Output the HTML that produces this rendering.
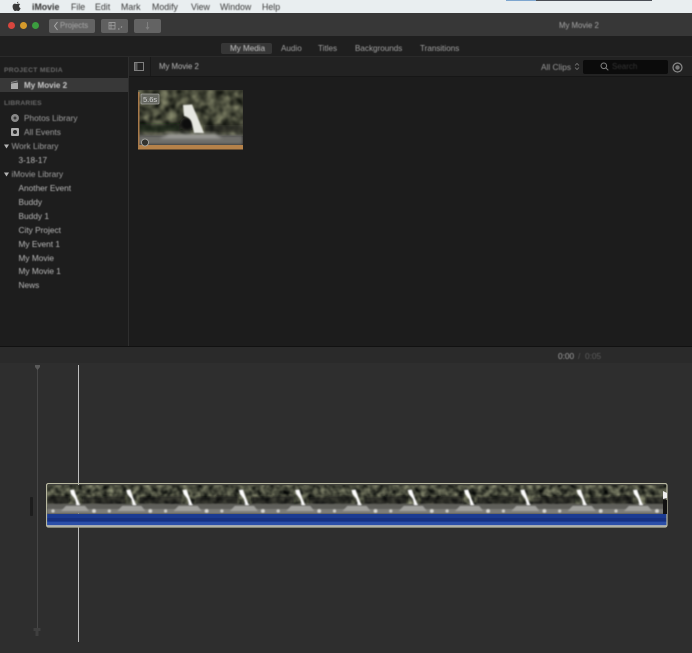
<!DOCTYPE html>
<html lang="en">
<head>
<meta charset="utf-8">
<title>iMovie</title>
<style>
html,body{margin:0;padding:0;background:#2d2d2d}
body{width:692px;height:653px;position:relative;overflow:hidden;font-family:"Liberation Sans",sans-serif}
#w{position:absolute;left:0;top:0;width:692px;height:653px;filter:blur(.35px)}
.a{position:absolute}
.t{position:absolute;white-space:nowrap;line-height:12px;filter:blur(.45px)}
.m{font-size:8.800px;color:#3c3c3c;top:1px}
.s{font-size:8.300px;color:#b8b8b8}
.tab{font-size:8.100px;color:#a0a0a0;top:42.500px}
</style>
</head>
<body>
<div id="w">
<!-- menu bar -->
<div class="a" style="left:0;top:0;width:692px;height:13px;background:#e9eef0"></div>
<div class="a" style="left:506px;top:0;width:30px;height:1px;background:#7ea6cf"></div>
<div class="a" style="left:536px;top:0;width:116px;height:1px;background:#4a4e55"></div>
<svg class="a" style="left:12px;top:1px" width="9" height="11" viewBox="0 0 9 11"><path d="M6.300 .6C5.500 .8 4.900 1.500 4.900 2.400C5.800 2.300 6.400 1.500 6.300 .6ZM4.700 3C4 3 3.600 2.600 2.900 2.600C1.600 2.700 .6 3.800 .6 5.500C.6 7.600 2 10 3.100 10C3.700 10 4 9.600 4.700 9.600C5.400 9.600 5.600 10 6.300 10C7.300 10 8.300 8.200 8.600 7.200C7.700 6.800 7.100 6 7.100 5.100C7.100 4.300 7.500 3.700 8.200 3.300C7.700 2.700 7 2.600 6.500 2.600C5.800 2.600 5.200 3 4.700 3Z" fill="#3a3a3a"/></svg>
<div class="t m" style="left:32px;font-weight:bold;color:#333">iMovie</div>
<div class="t m" style="left:71px">File</div>
<div class="t m" style="left:95px">Edit</div>
<div class="t m" style="left:121px">Mark</div>
<div class="t m" style="left:152px">Modify</div>
<div class="t m" style="left:191px">View</div>
<div class="t m" style="left:220px">Window</div>
<div class="t m" style="left:262px">Help</div>

<!-- title bar -->
<div class="a" style="left:0;top:13px;width:692px;height:23px;background:#373737"></div>
<div class="a" style="left:8px;top:22px;width:7px;height:7px;border-radius:50%;background:#d8463e"></div>
<div class="a" style="left:20px;top:22px;width:7px;height:7px;border-radius:50%;background:#d59a2b"></div>
<div class="a" style="left:32px;top:22px;width:7px;height:7px;border-radius:50%;background:#3c9d3f"></div>
<div class="a" style="left:49px;top:19px;width:46px;height:14px;border-radius:2px;background:#636363"></div>
<svg class="a" style="left:53px;top:21px" width="6" height="10" viewBox="0 0 6 10"><path d="M4.500 1L1.500 5L4.500 9" fill="none" stroke="#aaa" stroke-width="1"/></svg>
<div class="t" style="left:60px;top:20px;font-size:7.800px;color:#a8a8a8">Projects</div>
<div class="a" style="left:101px;top:19px;width:27px;height:14px;border-radius:2px;background:#606060"></div>
<svg class="a" style="left:106px;top:21px" width="18" height="10" viewBox="0 0 18 10"><path d="M3 1.500H9V8H3ZM5 1.500V8M3 4.700H9" fill="none" stroke="#999" stroke-width=".9"/><path d="M12 8H13.500M15 6.500L16 5.500" stroke="#a5a5a5" stroke-width="1"/></svg>
<div class="a" style="left:134px;top:19px;width:27px;height:14px;border-radius:2px;background:#636363"></div>
<svg class="a" style="left:143px;top:21px" width="9" height="10" viewBox="0 0 9 10"><path d="M4.500 1V7M3 6L4.500 8L6 6" fill="none" stroke="#808080" stroke-width="1"/></svg>
<div class="t" style="left:559px;top:20px;font-size:7.800px;color:#a5a5a5">My Movie 2</div>

<!-- tab bar -->
<div class="a" style="left:0;top:36px;width:692px;height:21px;background:#1f1f1f"></div>
<div class="a" style="left:221px;top:43px;width:51px;height:11px;border-radius:2px;background:#363636"></div>
<div class="t tab" style="left:230px;color:#c4c4c4">My Media</div>
<div class="t tab" style="left:281px">Audio</div>
<div class="t tab" style="left:318px">Titles</div>
<div class="t tab" style="left:355px">Backgrounds</div>
<div class="t tab" style="left:420px">Transitions</div>
<div class="a" style="left:0;top:56px;width:692px;height:1px;background:#2a2a2a"></div>

<!-- sidebar -->
<div class="a" style="left:0;top:57px;width:128px;height:289px;background:#1d1d1d"></div>
<div class="a" style="left:128px;top:57px;width:1px;height:289px;background:#2e2e2e"></div>
<div class="t" style="left:4px;top:65px;font-size:6.700px;font-weight:bold;color:#6a6a6a;letter-spacing:.3px">PROJECT MEDIA</div>
<div class="a" style="left:0;top:78px;width:128px;height:14px;background:#383838"></div>
<svg class="a" style="left:10px;top:80px" width="9" height="10" viewBox="0 0 9 10"><path d="M1 3.500L8 2.500V9H1Z" fill="#aaa"/><path d="M1 2.500L7.500 1" stroke="#888" stroke-width="1"/></svg>
<div class="t" style="left:24px;top:80px;font-size:8.100px;font-weight:bold;color:#c8c8c8">My Movie 2</div>
<div class="t" style="left:4px;top:98px;font-size:6.700px;font-weight:bold;color:#6a6a6a;letter-spacing:.2px">LIBRARIES</div>
<svg class="a" style="left:10px;top:113px" width="10" height="10" viewBox="0 0 10 10"><circle cx="5" cy="5" r="4" fill="#8a8a8a"/><circle cx="5" cy="5" r="1.500" fill="#3a3a3a"/></svg>
<div class="t s" style="left:24px;top:112px;color:#a0a0a0">Photos Library</div>
<svg class="a" style="left:10px;top:127px" width="10" height="10" viewBox="0 0 10 10"><rect x="1" y="1" width="8" height="8" rx="1" fill="#b0b0b0"/><circle cx="5" cy="5" r="2" fill="#2a2a2a"/></svg>
<div class="t s" style="left:24px;top:126px;color:#a0a0a0">All Events</div>
<svg class="a" style="left:3px;top:143px" width="7" height="7" viewBox="0 0 7 7"><path d="M1 1.500H6L3.500 5.500Z" fill="#b5b5b5"/></svg>
<div class="t s" style="left:11.500px;top:140px;color:#a0a0a0">Work Library</div>
<div class="t s" style="left:18.500px;top:154px">3-18-17</div>
<svg class="a" style="left:3px;top:171px" width="7" height="7" viewBox="0 0 7 7"><path d="M1 1.500H6L3.500 5.500Z" fill="#b5b5b5"/></svg>
<div class="t s" style="left:11.500px;top:168px;color:#a0a0a0">iMovie Library</div>
<div class="t s" style="left:18.500px;top:182px">Another Event</div>
<div class="t s" style="left:18.500px;top:196px">Buddy</div>
<div class="t s" style="left:18.500px;top:210px">Buddy 1</div>
<div class="t s" style="left:18.500px;top:224px">City Project</div>
<div class="t s" style="left:18.500px;top:238px">My Event 1</div>
<div class="t s" style="left:18.500px;top:252px">My Movie</div>
<div class="t s" style="left:18.500px;top:265px">My Movie 1</div>
<div class="t s" style="left:18.500px;top:279px">News</div>

<!-- browser -->
<div class="a" style="left:129px;top:57px;width:563px;height:289px;background:#1c1c1c"></div>
<div class="a" style="left:129px;top:57px;width:563px;height:20px;background:#222"></div>
<div class="a" style="left:129px;top:76px;width:563px;height:1px;background:#161616"></div>
<div class="a" style="left:150px;top:57px;width:1px;height:19px;background:#191919"></div>
<svg class="a" style="left:134px;top:62px" width="10" height="9" viewBox="0 0 10 9"><rect x=".5" y=".5" width="9" height="8" fill="none" stroke="#808080"/><rect x="1" y="1" width="2.500" height="7" fill="#5a5a5a"/></svg>
<div class="t" style="left:159px;top:61px;font-size:7.800px;color:#b8b8b8">My Movie 2</div>
<div class="t" style="left:541px;top:61px;font-size:8.300px;color:#999">All Clips</div>
<svg class="a" style="left:574px;top:62px" width="6" height="9" viewBox="0 0 6 9"><path d="M1 3.500L3 1.500L5 3.500M1 5.500L3 7.500L5 5.500" fill="none" stroke="#777" stroke-width=".8"/></svg>
<div class="a" style="left:583px;top:60px;width:85px;height:14px;border-radius:2px;background:#0b0b0b"></div>
<svg class="a" style="left:600px;top:62px" width="9" height="9" viewBox="0 0 9 9"><circle cx="3.800" cy="3.800" r="2.800" fill="none" stroke="#808080"/><path d="M5.800 5.800L8.300 8.300" stroke="#808080"/></svg>
<div class="t" style="left:612px;top:61px;font-size:8px;color:#333">Search</div>
<svg class="a" style="left:672px;top:62px" width="11" height="11" viewBox="0 0 11 11"><circle cx="5.500" cy="5.500" r="4.500" fill="none" stroke="#8a8a8a" stroke-width="1.200"/><circle cx="5.500" cy="5.500" r="2.200" fill="#7a7a7a"/></svg>

<!-- thumbnail -->
<svg class="a" style="left:138px;top:90px" width="105" height="60" viewBox="0 0 105 60">
<defs>
<filter id="n" x="0" y="0" width="100%" height="100%" color-interpolation-filters="sRGB">
<feTurbulence type="fractalNoise" baseFrequency=".13" numOctaves="2" seed="4"/>
<feColorMatrix type="matrix" values=".75 0 0 0 -.09  .75 0 0 0 -.08  .6 0 0 0 -.07  0 0 0 0 1"/>
<feGaussianBlur stdDeviation="1"/>
</filter>
<filter id="b1"><feGaussianBlur stdDeviation="1.500"/></filter>
<filter id="b2"><feGaussianBlur stdDeviation=".7"/></filter>
</defs>
<rect width="105" height="46" fill="#3a3b30"/>
<rect width="105" height="46" filter="url(#n)"/>
<g filter="url(#b1)">
<rect y="34" width="42" height="8" fill="#16170f" opacity=".7"/>
<rect x="66" y="35" width="39" height="7" fill="#16170f" opacity=".55"/>
<ellipse cx="49" cy="34" rx="7" ry="7" fill="#0f0f0b"/>
<rect y="45" width="105" height="10" fill="#6e6e6a"/>
<path d="M30 44H78L84 48H22Z" fill="#a3a39f"/>
</g>
<g filter="url(#b2)">
<path d="M45 15L54 14.500L59 26L66 43H56L54 34C53 29 50 27 46 26Z" fill="#e6e7e1"/>
</g>
<rect y="55" width="105" height="4.500" fill="#b5824a"/>
<rect y="2" width="1.500" height="56" fill="#a97a4a"/>
<rect x="3" y="4" width="18" height="10" rx="1" fill="#666861" stroke="#a0a09b" stroke-width=".8"/>
<text x="5" y="12" font-family="Liberation Sans, sans-serif" font-size="7.500" fill="#d0d0d0">5.6s</text>
<circle cx="7" cy="52.500" r="3.500" fill="#33332e" stroke="#b5b5b0" stroke-width=".8"/>
</svg>

<!-- timeline -->
<div class="a" style="left:0;top:346px;width:692px;height:1px;background:#111"></div>
<div class="a" style="left:0;top:347px;width:692px;height:16px;background:#2a2a2a"></div>
<div class="a" style="left:0;top:363px;width:692px;height:290px;background:#2e2e2e"></div>
<div class="t" style="left:558px;top:350px;font-size:8.300px;color:#a0a0a0">0:00</div>
<div class="t" style="left:578px;top:350px;font-size:8.300px;color:#565656">/</div>
<div class="t" style="left:585px;top:350px;font-size:8.300px;color:#5c5c5c">0:05</div>

<div class="a" style="left:37px;top:367px;width:1px;height:268px;background:#464646"></div>
<svg class="a" style="left:34px;top:364px" width="7" height="7" viewBox="0 0 7 7"><path d="M1 1H6V3L3.500 6L1 3Z" fill="#5a5a5a"/></svg>
<svg class="a" style="left:32px;top:626px" width="10" height="12" viewBox="0 0 10 12"><path d="M1.500 2H8.500V5H1.500ZM3.500 5H6.500V10H3.500Z" fill="#3f3f3f"/></svg>
<div class="a" style="left:78px;top:365px;width:1px;height:277px;background:#bdbdbd"></div>
<div class="a" style="left:30px;top:497px;width:3px;height:19px;border-radius:1px;background:#1d1d1d"></div>

<svg class="a" style="left:46px;top:483px" width="622" height="45" viewBox="0 0 622 45">
<defs>
<filter id="n2" x="0" y="0" width="100%" height="100%" color-interpolation-filters="sRGB">
<feTurbulence type="fractalNoise" baseFrequency=".16" numOctaves="2" seed="7"/>
<feColorMatrix type="matrix" values=".8 0 0 0 -.12  .8 0 0 0 -.11  .65 0 0 0 -.09  0 0 0 0 1"/>
<feGaussianBlur stdDeviation=".8"/>
</filter>
<filter id="b3"><feGaussianBlur stdDeviation=".8"/></filter>
<pattern id="f" x="1" y="2" width="56.300" height="29" patternUnits="userSpaceOnUse">
<rect y="11" width="22" height="8" fill="#16170f" opacity=".6"/>
<rect x="36" y="12" width="21" height="7" fill="#16170f" opacity=".6"/>
<rect y="19" width="56.300" height="10" fill="#5e5e5a"/>
<rect y="24" width="56.300" height="5" fill="#7c7c77"/>
<path d="M23 5L27 4.500L30 13L33 20H29.500L28 14L24 9Z" fill="#ffffff"/>
<path d="M19 21H38L42 26H14Z" fill="#a0a09c"/>
<circle cx="47" cy="26" r="1.800" fill="#dcdcd8"/>
<circle cx="6" cy="26" r="1.500" fill="#d4d4d0"/>
</pattern>
</defs>
<rect x="1" y="2" width="620" height="22" fill="#3a3b30"/>
<rect x="1" y="2" width="620" height="22" filter="url(#n2)"/>
<rect x="1" y="2" width="620" height="29" fill="url(#f)" filter="url(#b3)"/>
<rect x="1" y="31" width="620" height="11" fill="#1b3b92"/>
<rect x="1" y="35" width="620" height="3" fill="#173180"/>
<rect x="1" y="39" width="620" height="3" fill="#2c4fa8"/>
<rect x="1" y="42" width="620" height="2" fill="#a3a9b3"/>
<rect x=".5" y=".5" width="620.500" height="43.500" rx="2" fill="none" stroke="#b8b8a0" stroke-width="1.200"/>
<path d="M617 8L621 10V15L617 16Z" fill="#f0f0f0"/>
<rect x="617" y="17" width="4" height="14" fill="#111"/>
</svg>
</div>
</body>
</html>
